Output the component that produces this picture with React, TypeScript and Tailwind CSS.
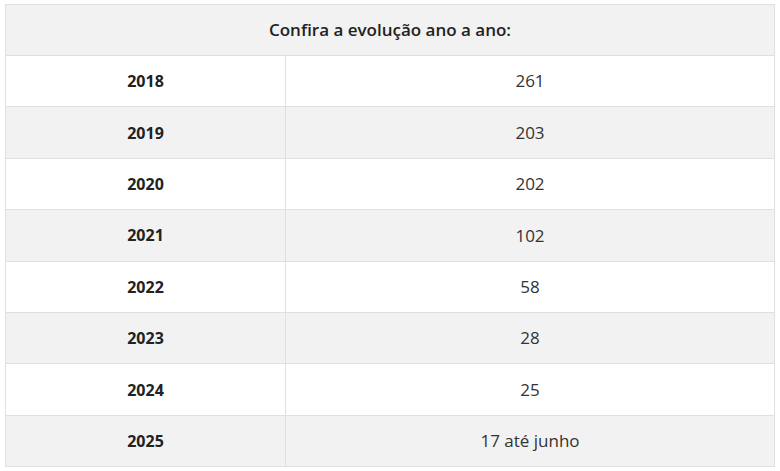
const ROWS: { year: string; value: string }[] = [
  { year: '2018', value: '261' },
  { year: '2019', value: '203' },
  { year: '2020', value: '202' },
  { year: '2021', value: '102' },
  { year: '2022', value: '58' },
  { year: '2023', value: '28' },
  { year: '2024', value: '25' },
  { year: '2025', value: '17 até junho' },
];

export default function App() {
  return (
    <div className="w-[780px] h-[471px] bg-white pt-[4px] pl-[5px] font-['Open_Sans',sans-serif] text-[#222]">
      <table className="w-[770px] border-collapse border border-[#e0e0e0]">
        <thead>
          <tr className="bg-[#f2f2f2] h-[51px]">
            <th colSpan={2} className="border border-[#e0e0e0] text-[17px] font-semibold text-center">
              Confira a evolução ano a ano:
            </th>
          </tr>
        </thead>
        <tbody>
          {ROWS.map((row, i) => (
            <tr key={row.year} className={`h-[51.4px] ${i % 2 === 1 ? 'bg-[#f2f2f2]' : 'bg-white'}`}>
              <td className="w-[280px] border border-[#e0e0e0] text-center text-[16px] font-bold">{row.year}</td>
              <td className="border border-[#e0e0e0] text-center text-[17px] text-[#333]">{row.value}</td>
            </tr>
          ))}
        </tbody>
      </table>
    </div>
  );
}
